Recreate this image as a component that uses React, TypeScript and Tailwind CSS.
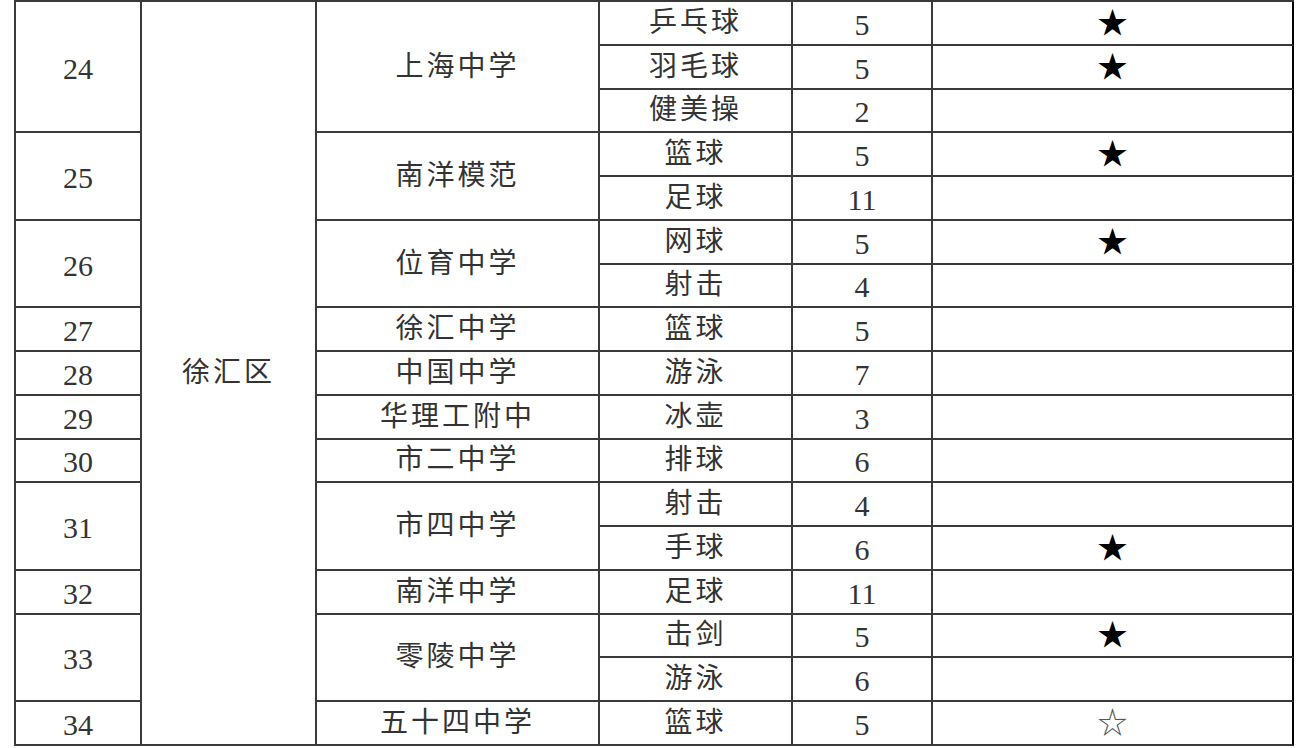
import React from "react";

type Sub = { sport: string; n: string; star?: "full" | "empty" };
type Group = { no: string; school: string; subs: Sub[] };

const groups: Group[] = [
  { no: "24", school: "上海中学", subs: [
    { sport: "乒乓球", n: "5", star: "full" },
    { sport: "羽毛球", n: "5", star: "full" },
    { sport: "健美操", n: "2" },
  ]},
  { no: "25", school: "南洋模范", subs: [
    { sport: "篮球", n: "5", star: "full" },
    { sport: "足球", n: "11" },
  ]},
  { no: "26", school: "位育中学", subs: [
    { sport: "网球", n: "5", star: "full" },
    { sport: "射击", n: "4" },
  ]},
  { no: "27", school: "徐汇中学", subs: [{ sport: "篮球", n: "5" }] },
  { no: "28", school: "中国中学", subs: [{ sport: "游泳", n: "7" }] },
  { no: "29", school: "华理工附中", subs: [{ sport: "冰壶", n: "3" }] },
  { no: "30", school: "市二中学", subs: [{ sport: "排球", n: "6" }] },
  { no: "31", school: "市四中学", subs: [
    { sport: "射击", n: "4" },
    { sport: "手球", n: "6", star: "full" },
  ]},
  { no: "32", school: "南洋中学", subs: [{ sport: "足球", n: "11" }] },
  { no: "33", school: "零陵中学", subs: [
    { sport: "击剑", n: "5", star: "full" },
    { sport: "游泳", n: "6" },
  ]},
  { no: "34", school: "五十四中学", subs: [{ sport: "篮球", n: "5", star: "empty" }] },
];

const rowStart = [
  "", "row-start-1", "row-start-2", "row-start-3", "row-start-4", "row-start-5", "row-start-6",
  "row-start-7", "row-start-8", "row-start-9", "row-start-10", "row-start-11", "row-start-12",
  "row-start-13", "row-start-14", "row-start-15", "row-start-16", "row-start-17",
];
const rowSpan = ["", "row-span-1", "row-span-2", "row-span-3"];

const cell =
  "flex items-center justify-center border-r-2 border-b-2 border-[#3a3a3a] text-[#333] overflow-hidden";

export default function App() {
  const cells: React.ReactNode[] = [];
  let row = 1;
  groups.forEach((g, gi) => {
    const span = g.subs.length;
    cells.push(
      <div key={`no${gi}`} className={`${cell} col-start-1 ${rowStart[row]} ${rowSpan[span]} text-[30px] pt-[3px]`}>
        {g.no}
      </div>
    );
    cells.push(
      <div key={`sc${gi}`} className={`${cell} col-start-3 ${rowStart[row]} ${rowSpan[span]} tracking-[3px]`}>
        {g.school}
      </div>
    );
    g.subs.forEach((s, si) => {
      const r = row + si;
      cells.push(
        <div key={`sp${gi}-${si}`} className={`${cell} col-start-4 ${rowStart[r]} row-span-1 tracking-[3px]`}>
          {s.sport}
        </div>
      );
      cells.push(
        <div key={`n${gi}-${si}`} className={`${cell} col-start-5 ${rowStart[r]} row-span-1 text-[30px] pt-[3px]`}>
          {s.n}
        </div>
      );
      cells.push(
        <div key={`st${gi}-${si}`} className={`${cell} col-start-6 ${rowStart[r]} row-span-1 border-r-black text-black`}>
          {s.star === "full" ? (
            <span className="text-[30px] leading-none">★</span>
          ) : s.star === "empty" ? (
            <span className="text-[30px] leading-none text-[#555]">☆</span>
          ) : null}
        </div>
      );
    });
    row += span;
  });
  cells.push(
    <div key="district" className={`${cell} col-start-2 row-start-1 row-span-17 tracking-[3px]`}>
      徐汇区
    </div>
  );

  return (
    <div className="w-[1306px] h-[748px] bg-white overflow-hidden font-['Liberation_Serif','Noto_Sans_CJK_SC',serif]">
      <div className="ml-[14px] grid w-[1280px] grid-cols-[126px_175px_283px_193px_140px_361px] grid-rows-[repeat(17,43.75px)] border-l-2 border-t-2 border-[#3a3a3a] text-[28px]">
        {cells}
      </div>
    </div>
  );
}
